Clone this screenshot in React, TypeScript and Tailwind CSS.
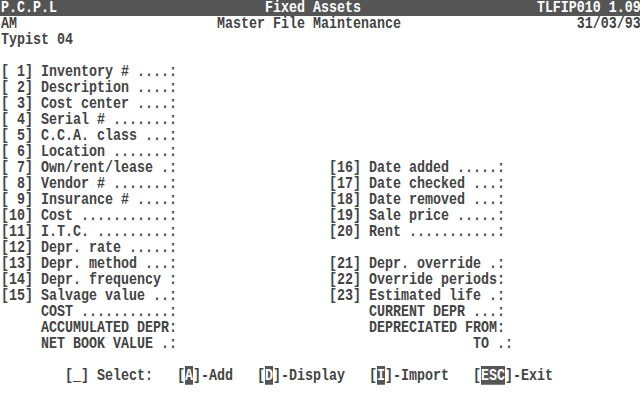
import React from 'react';

// 80x25 text-mode screen: each cell is 8px wide, 16px high
const COLS = 80;

const line = (...parts: [number, string][]) => {
  let s = ''.padEnd(COLS, ' ');
  parts.forEach(([col, text]) => {
    s = s.slice(0, col) + text + s.slice(col + text.length);
  });
  return s.trimEnd();
};

const body: string[] = [
  line([0, 'Typist 04']),
  '',
  line([0, '[ 1] Inventory # ....:']),
  line([0, '[ 2] Description ....:']),
  line([0, '[ 3] Cost center ....:']),
  line([0, '[ 4] Serial # .......:']),
  line([0, '[ 5] C.C.A. class ...:']),
  line([0, '[ 6] Location .......:']),
  line([0, '[ 7] Own/rent/lease .:'], [41, '[16] Date added .....:']),
  line([0, '[ 8] Vendor # .......:'], [41, '[17] Date checked ...:']),
  line([0, '[ 9] Insurance # ....:'], [41, '[18] Date removed ...:']),
  line([0, '[10] Cost ...........:'], [41, '[19] Sale price .....:']),
  line([0, '[11] I.T.C. .........:'], [41, '[20] Rent ...........:']),
  line([0, '[12] Depr. rate .....:']),
  line([0, '[13] Depr. method ...:'], [41, '[21] Depr. override .:']),
  line([0, '[14] Depr. frequency :'], [41, '[22] Override periods:']),
  line([0, '[15] Salvage value ..:'], [41, '[23] Estimated life .:']),
  line([5, 'COST ...........:'], [46, 'CURRENT DEPR ...:']),
  line([5, 'ACCUMULATED DEPR:'], [46, 'DEPRECIATED FROM:']),
  line([5, 'NET BOOK VALUE .:'], [59, 'TO .:']),
  '',
];

const Row: React.FC<{ children?: React.ReactNode; className?: string }> = ({ children, className = '' }) => (
  <div className={`h-[16px] flex items-center whitespace-pre pl-px ${className}`}>
    <span className="block leading-[12px] scale-y-125">{children}</span>
  </div>
);

const Key: React.FC<{ label: string }> = ({ label }) => (
  <>
    [<span className="bg-[#555555] text-white">{label}</span>]
  </>
);

const App: React.FC = () => {
  return (
    <div
      className="w-[640px] h-[399px] overflow-hidden bg-white text-[#444444] font-bold text-[13.333px] tracking-normal"
      style={{ fontFamily: '"Liberation Mono", "DejaVu Sans Mono", monospace' }}
    >
      {/* title bar */}
      <Row className="bg-[#555555] text-white">
        {line([0, 'P.C.P.L'], [33, 'Fixed Assets'], [67, 'TLFIP010 1.09'])}
      </Row>
      <Row>{line([0, 'AM'], [27, 'Master File Maintenance'], [72, '31/03/93'])}</Row>

      {body.map((text, i) => (
        <Row key={i}>{text}</Row>
      ))}

      {/* command line */}
      <Row>
        {'        [_] Select:   '}
        <Key label="A" />
        {'-Add   '}
        <Key label="D" />
        {'-Display   '}
        <Key label="I" />
        {'-Import   '}
        <Key label="ESC" />
        {'-Exit'}
      </Row>
    </div>
  );
};

export default App;
